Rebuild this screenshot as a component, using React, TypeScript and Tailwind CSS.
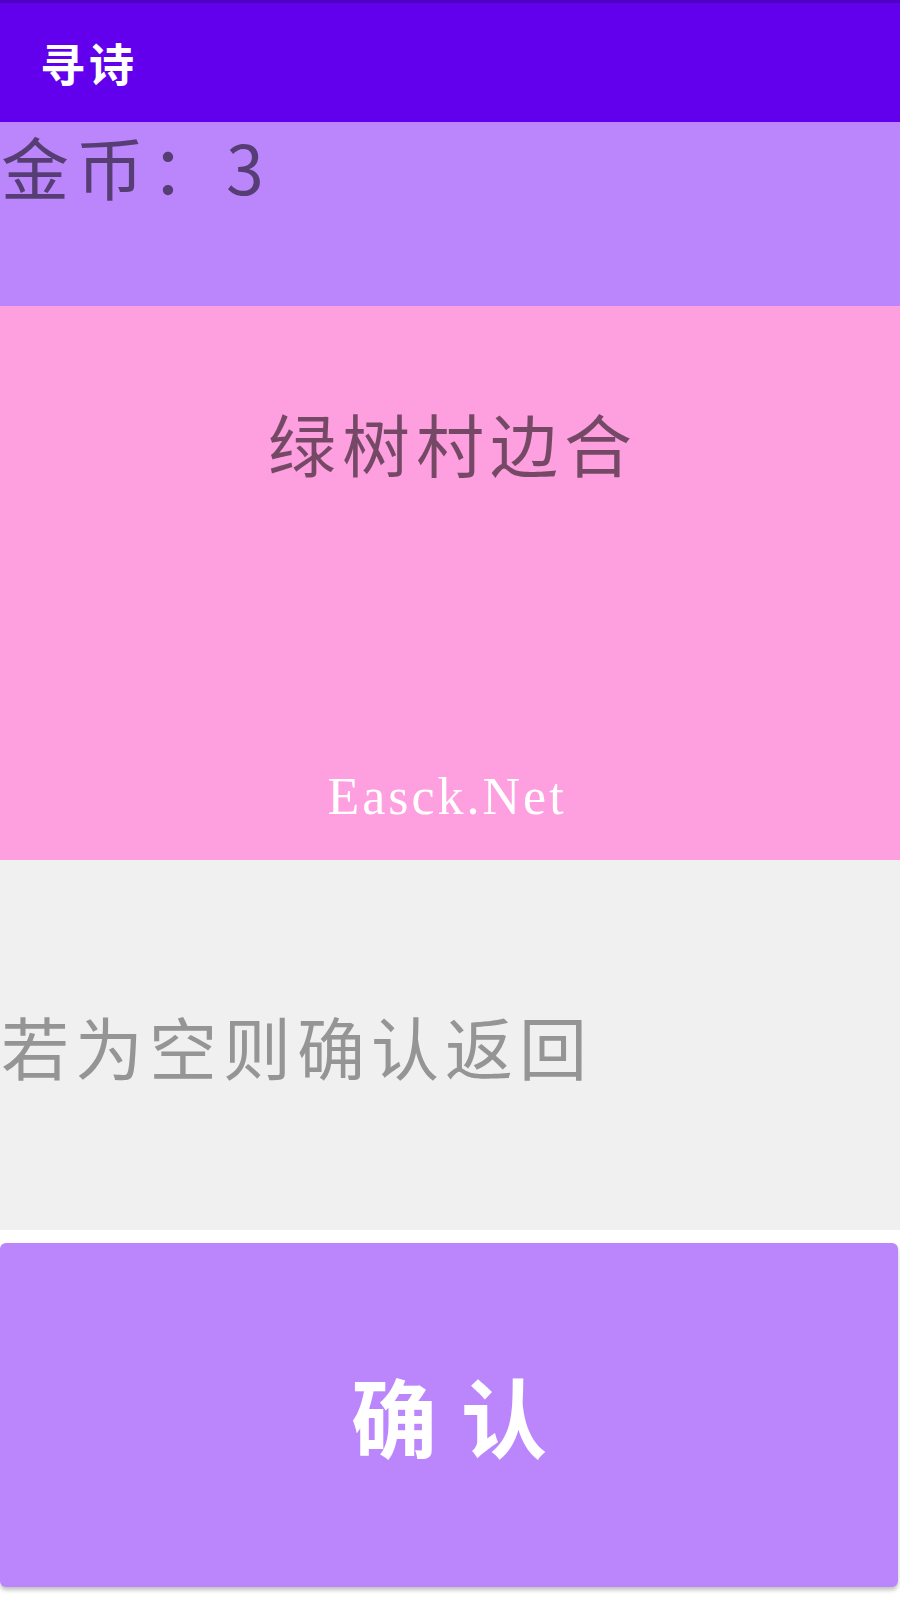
const cjk = { fontFamily: '"Noto Sans CJK SC", "Noto Sans", sans-serif' };

export default function App() {
  return (
    <div className="flex h-[1600px] w-[900px] flex-col bg-white" style={cjk}>
      {/* app bar */}
      <header className="flex h-[122px] items-center border-t-[3px] border-[#4d00c4] bg-[#6200ee] pl-[40px]">
        <h1 className="text-[45px] leading-none font-bold tracking-[4px] text-white">寻诗</h1>
      </header>

      {/* coins */}
      <div className="h-[184px] bg-[#bb86fc] pt-[10px] pl-[1px]">
        <p className="text-[68px] leading-none tracking-[7px] text-[rgba(0,0,0,0.54)]">金币：3</p>
      </div>

      {/* poem line */}
      <div className="flex h-[554px] flex-col items-center bg-[#fea0df] pt-[103px]">
        <p className="pl-[6px] text-[68px] leading-none tracking-[6px] text-[rgba(0,0,0,0.54)]">绿树村边合</p>
        <p
          className="mt-[294px] pr-[6px] text-[52px] leading-none tracking-[3px] text-white"
          style={{ fontFamily: '"Liberation Serif", serif' }}
        >
          Easck.Net
        </p>
      </div>

      {/* answer input */}
      <div className="flex h-[370px] items-center bg-[#f0f0f0] pl-[1px]">
        <input
          className="w-full bg-transparent text-[68px] leading-none tracking-[6px] text-[#444] outline-none placeholder:text-[#959595]"
          placeholder="若为空则确认返回"
          style={cjk}
        />
      </div>

      <div className="h-[13px]" />

      <button
        type="button"
        className="mr-[2px] flex h-[344px] items-center justify-center rounded-[6px] bg-[#bb86fc] pl-[24px] text-[86px] leading-none font-bold tracking-[24px] text-white shadow-[0_3px_4px_rgba(0,0,0,0.25)]"
        style={cjk}
      >
        确认
      </button>
    </div>
  );
}
